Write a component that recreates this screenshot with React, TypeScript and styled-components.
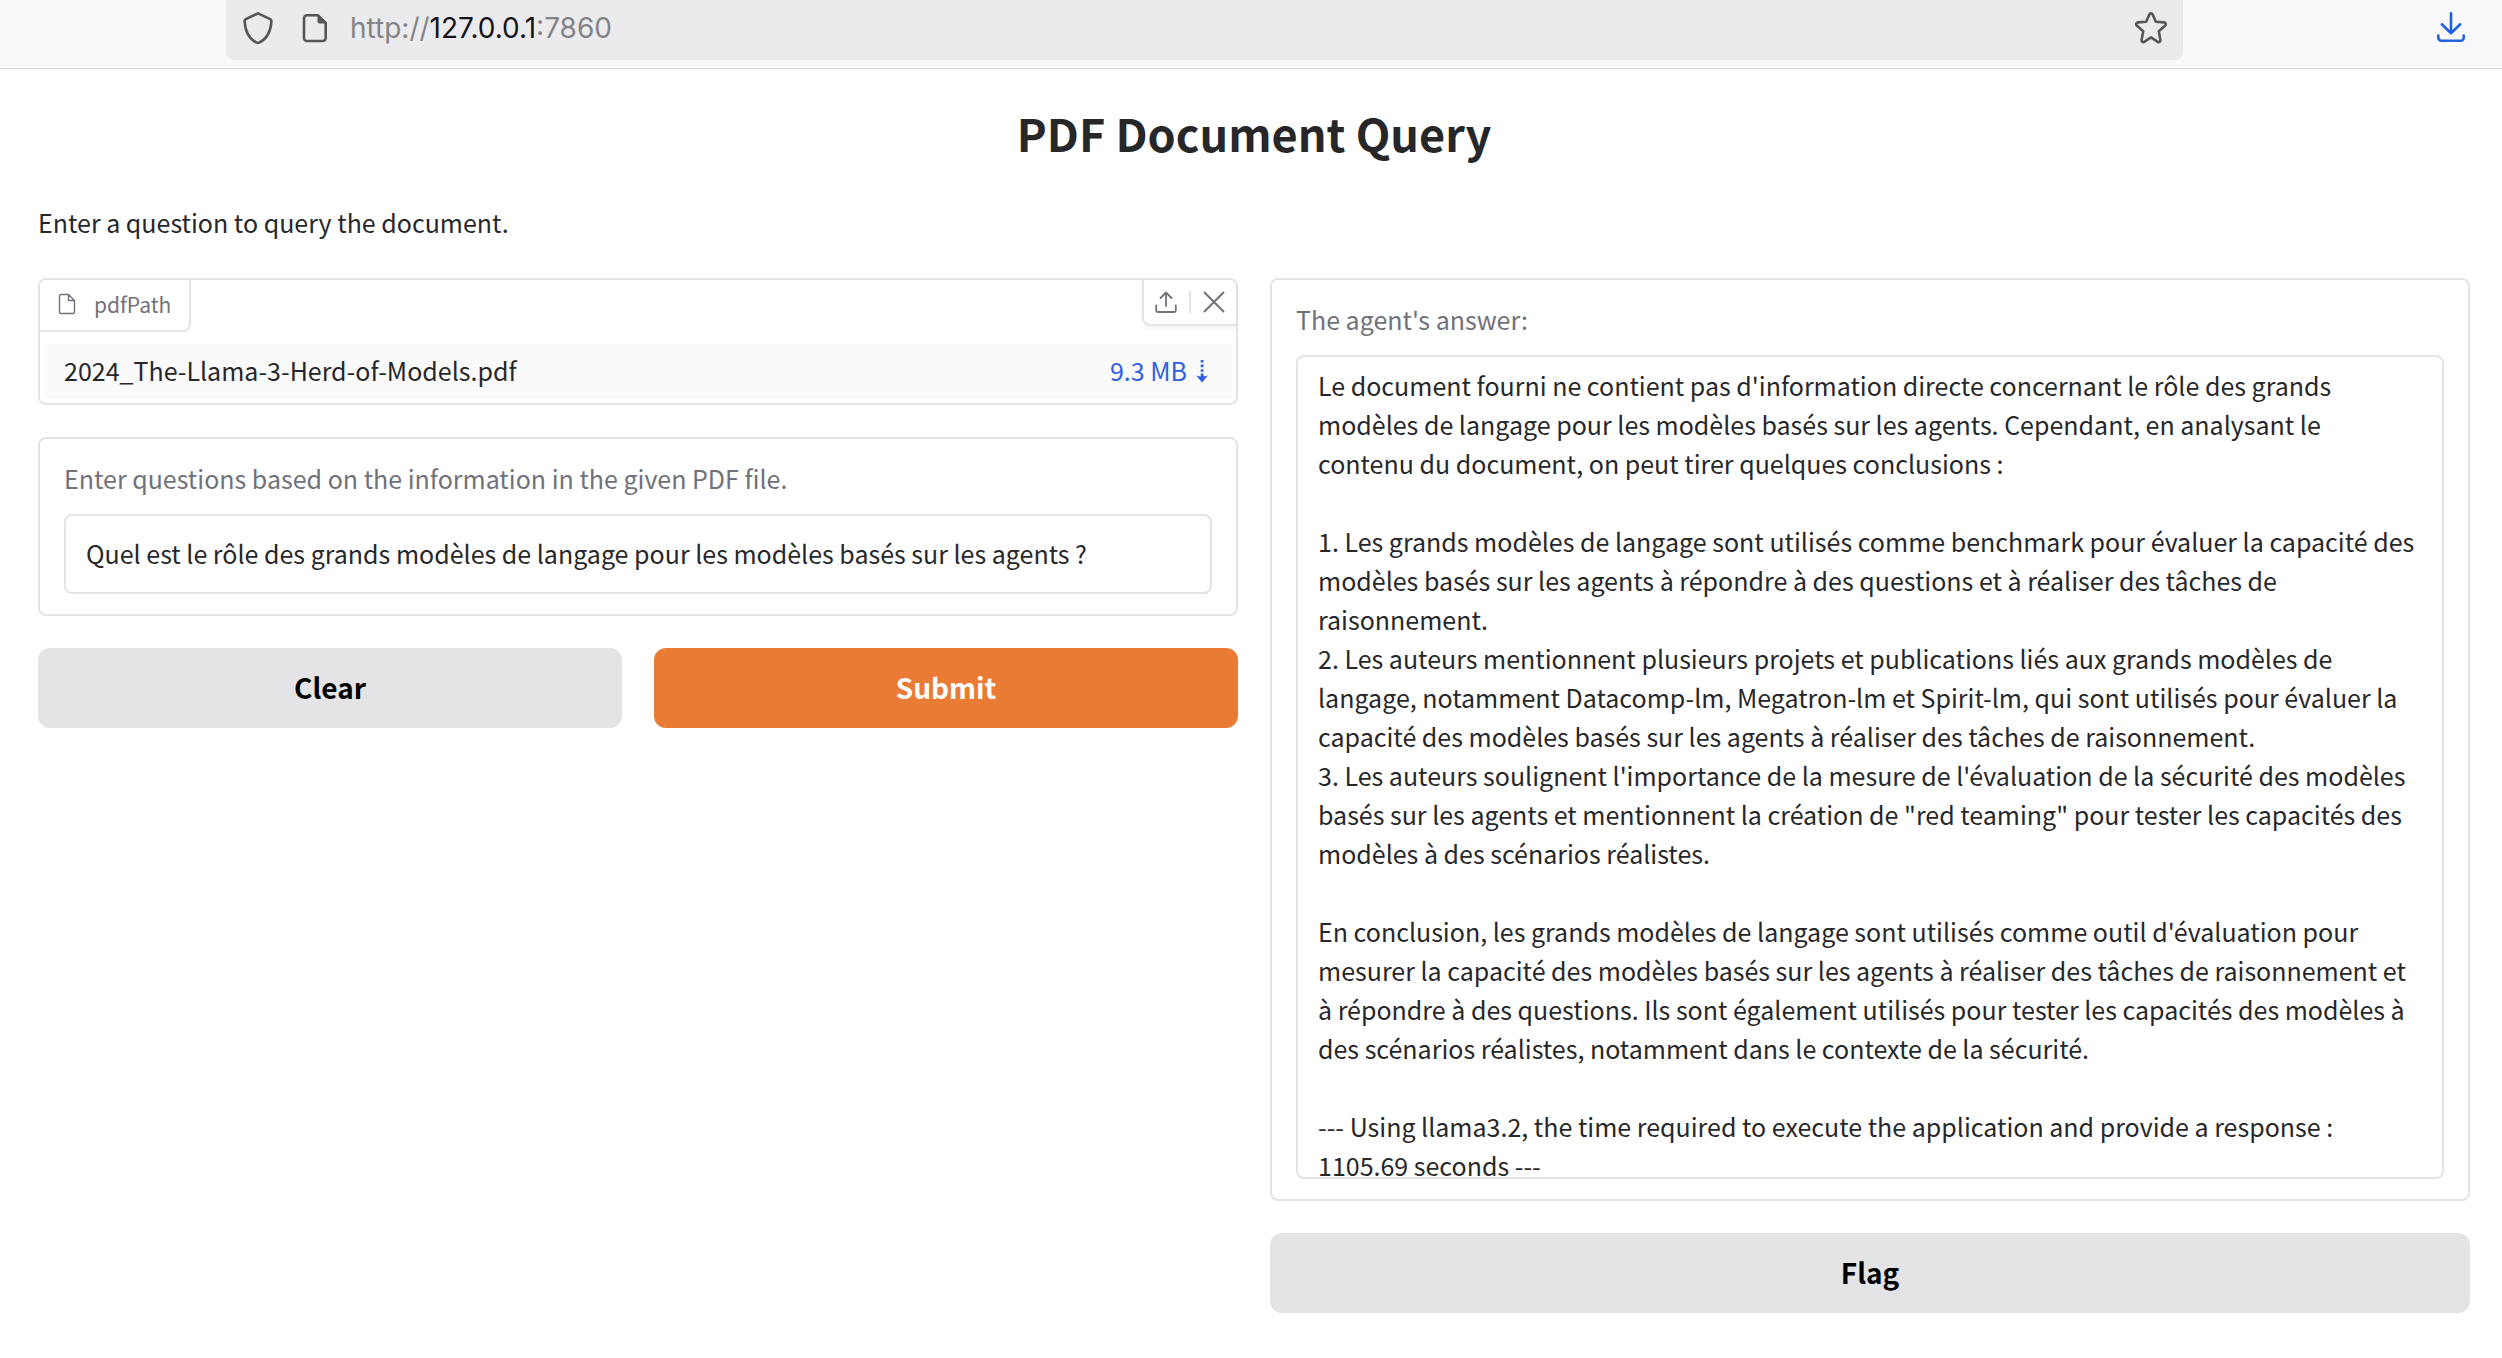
import React, { useState } from "react";
import styled, { createGlobalStyle } from "styled-components";

const sans = `"Noto Sans CJK SC", "Noto Sans", sans-serif`;
const line = "#e4e4e7";
const ink = "#27272a";
const muted = "#71717a";

const GlobalStyle = createGlobalStyle`
  *, *::before, *::after { box-sizing: border-box; }
  body { margin: 0; background: #fff; color: ${ink}; font-family: ${sans}; font-size: 25px; line-height: 39px; }
  button, input, textarea { font: inherit; color: inherit; }
  svg { display: block; flex: none; }
`;

const BrowserBar = styled.header`
  display: flex;
  align-items: flex-start;
  justify-content: space-between;
  height: 69px;
  padding: 0 35px 0 226px;
  background: #f9f9fb;
  border-bottom: 1px solid #d9d9de;
`;

const AddressBar = styled.div`
  flex: 1;
  display: flex;
  align-items: center;
  height: 60px;
  margin-right: 252px;
  padding: 0 15px 4px 16px;
  background: #ebebed;
  border-radius: 0 0 8px 8px;
`;

const Address = styled.div`
  flex: 1;
  margin-left: 22px;
  font-family: Inter, sans-serif;
  font-size: 28px;
  color: #848486;
`;

const Host = styled.span`
  color: #15141a;
`;

const IconButton = styled.button<{ $gap?: number }>`
  display: flex;
  margin: 0 0 0 ${(p) => p.$gap ?? 0}px;
  padding: 0;
  border: 0;
  background: none;
  color: #55555a;
`;

const DownloadsButton = styled(IconButton)`
  padding-top: 11px;
  color: #1f62e0;
`;

const Page = styled.main`
  padding: 32px 32px 45px 38px;
`;

const Title = styled.h1`
  margin: 0 0 38px;
  font-size: 45px;
  line-height: 64px;
  font-weight: 700;
  text-align: center;
`;

const Description = styled.p`
  margin: 0 0 36px;
`;

const Columns = styled.div`
  display: grid;
  grid-template-columns: 1fr 1fr;
  align-items: start;
  gap: 32px;
`;

const Column = styled.section`
  display: flex;
  flex-direction: column;
  gap: 32px;
  min-width: 0;
`;

const Block = styled.div`
  border: 2px solid ${line};
  border-radius: 8px;
  background: #fff;
`;

const FileHeader = styled.div`
  display: flex;
  align-items: flex-start;
  justify-content: space-between;
`;

const FileLabel = styled.div`
  display: flex;
  align-items: center;
  gap: 18px;
  height: 52px;
  padding: 0 18px 2px;
  border: solid ${line};
  border-width: 0 2px 2px 0;
  border-radius: 0 0 8px 0;
  font-size: 21px;
  color: ${muted};
`;

const FileActions = styled.div`
  display: flex;
  align-items: center;
  gap: 12px;
  height: 46px;
  padding: 0 11px;
  border: solid ${line};
  border-width: 0 0 2px 2px;
  border-radius: 0 0 0 8px;
  box-shadow: 0 2px 4px rgba(0, 0, 0, 0.05);
`;

const Divider = styled.span`
  width: 2px;
  height: 22px;
  background: ${line};
`;

const FileAction = styled(IconButton)`
  color: ${muted};
`;

const FileRow = styled.div`
  display: flex;
  align-items: center;
  justify-content: space-between;
  height: 55px;
  margin: 12px 4px 4px;
  padding: 0 24px 2px 20px;
  background: #fafafa;
`;

const FileLink = styled.a`
  display: flex;
  align-items: center;
  gap: 9px;
  color: #2f5fe3;
  text-decoration: none;
`;

const Field = styled(Block)`
  display: flex;
  flex-direction: column;
  padding: 20px 24px;
`;

const FieldLabel = styled.label`
  margin-bottom: 16px;
  color: ${muted};
`;

const boxed = `
  display: block;
  width: 100%;
  border: 2px solid ${line};
  border-radius: 8px;
  background: #fff;
  outline: none;
`;

const TextInput = styled.input`
  ${boxed}
  height: 80px;
  padding: 0 20px 2px;
`;

const Answer = styled.textarea`
  ${boxed}
  padding: 9px 20px 31px;
  resize: none;
  overflow: hidden;
`;

const Actions = styled.div`
  display: grid;
  grid-template-columns: 1fr 1fr;
  gap: 32px;
`;

const Button = styled.button<{ $primary?: boolean }>`
  height: 80px;
  padding: 0 24px 2px;
  border: 0;
  border-radius: 12px;
  background: ${(p) => (p.$primary ? "#e97b35" : "#e4e4e6")};
  color: ${(p) => (p.$primary ? "#fff" : "#000")};
  font-size: 28px;
  font-weight: 700;
`;

const ShieldIcon = () => (
  <svg width="32" height="34" viewBox="0 0 32 34" fill="none" stroke="currentColor" strokeWidth="2.6" strokeLinejoin="round">
    <path d="M16 2.3 28.2 8.2c.9.5 1.3 1.2 1.2 2.2C28.8 20 24.5 28.2 17.2 31.7q-1.2.6-2.400 0C7.500 28.200 3.200 20 2.600 10.400c-.1-1 .3-1.700 1.200-2.200Z" />
  </svg>
);

const PageIcon = () => (
  <svg width="26" height="30" viewBox="0 0 26 30" fill="none" stroke="currentColor" strokeWidth="2.6" strokeLinejoin="round">
    <path d="M5 2.300h11L23.700 10v15a3 3 0 0 1-3 3H5a3 3 0 0 1-3-3V5.300a3 3 0 0 1 3-3Z" />
    <path d="M15.500 2v6.500a2 2 0 0 0 2 2H24Z" fill="currentColor" stroke="none" />
  </svg>
);

const StarIcon = () => (
  <svg width="34" height="34" viewBox="0 0 34 34" fill="none" stroke="currentColor" strokeWidth="2.6" strokeLinejoin="round">
    <path d="M15.300 3.500c.7-1.500 2.700-1.500 3.400 0l3.100 7.200 8.300.7c1.700.2 2.300 2 1.100 3.200l-6.400 5.600 1.600 8.900c.3 1.700-1.200 2.600-2.600 1.700L17 26.300l-6.800 4.500c-1.400.9-2.900 0-2.600-1.700l1.600-8.900-6.400-5.600c-1.200-1.200-.6-3 1.100-3.200l8.300-.7Z" />
  </svg>
);

const DownloadsIcon = () => (
  <svg width="32" height="32" viewBox="0 0 32 32" fill="none" stroke="currentColor" strokeWidth="2.6" strokeLinecap="round" strokeLinejoin="round">
    <path d="M16 2.300v20M6.800 13.300l9.200 9 9.200-9M3.300 24.500v2.200a3 3 0 0 0 3 3h19.400a3 3 0 0 0 3-3v-2.200" />
  </svg>
);

const FileIcon = () => (
  <svg width="18" height="22" viewBox="0 0 18 22" fill="none" stroke="currentColor" strokeWidth="1.4" strokeLinejoin="round">
    <path d="M10.500 1.500H3A1.500 1.500 0 0 0 1.500 3v16A1.500 1.500 0 0 0 3 20.500h12a1.500 1.500 0 0 0 1.500-1.500V7.500Zm0 0v6h6" />
  </svg>
);

const UploadIcon = () => (
  <svg width="22" height="22" viewBox="0 0 22 22" fill="none" stroke="currentColor" strokeWidth="1.8" strokeLinecap="round" strokeLinejoin="round">
    <path d="M11 15V1.500M5.500 7 11 1.500 16.500 7M1.200 14.500v5a1.500 1.500 0 0 0 1.500 1.500h16.600a1.500 1.500 0 0 0 1.500-1.500v-5" />
  </svg>
);

const CloseIcon = () => (
  <svg width="22" height="22" viewBox="0 0 22 22" fill="none" stroke="currentColor" strokeWidth="2" strokeLinecap="round">
    <path d="m1.500 1.500 19 19M20.500 1.500l-19 19" />
  </svg>
);

const ArrowIcon = () => (
  <svg width="12" height="24" viewBox="0 0 12 24" fill="currentColor">
    <path d="M4.700 1h2.800v2.600H4.700ZM4.700 5.600h2.800v2.600H4.700ZM4.700 10.200h2.800v2.600H4.700ZM4.700 14.600h2.800V18H4.700ZM.2 16.500q5.800 1.800 11.600 0L6.100 23.500Z" />
  </svg>
);

const answer = `Le document fourni ne contient pas d'information directe concernant le rôle des grands modèles de langage pour les modèles basés sur les agents. Cependant, en analysant le contenu du document, on peut tirer quelques conclusions :

1. Les grands modèles de langage sont utilisés comme benchmark pour évaluer la capacité des modèles basés sur les agents à répondre à des questions et à réaliser des tâches de raisonnement.
2. Les auteurs mentionnent plusieurs projets et publications liés aux grands modèles de langage, notamment Datacomp-lm, Megatron-lm et Spirit-lm, qui sont utilisés pour évaluer la capacité des modèles basés sur les agents à réaliser des tâches de raisonnement.
3. Les auteurs soulignent l'importance de la mesure de l'évaluation de la sécurité des modèles basés sur les agents et mentionnent la création de "red teaming" pour tester les capacités des modèles à des scénarios réalistes.

En conclusion, les grands modèles de langage sont utilisés comme outil d'évaluation pour mesurer la capacité des modèles basés sur les agents à réaliser des tâches de raisonnement et à répondre à des questions. Ils sont également utilisés pour tester les capacités des modèles à des scénarios réalistes, notamment dans le contexte de la sécurité.

--- Using llama3.2, the time required to execute the application and provide a response : 1105.69 seconds ---`;

export default function App() {
  const [question, setQuestion] = useState(
    "Quel est le rôle des grands modèles de langage pour les modèles basés sur les agents ?"
  );

  return (
    <>
      <GlobalStyle />
      <BrowserBar>
        <AddressBar>
          <IconButton aria-label="Tracking protection"><ShieldIcon /></IconButton>
          <IconButton $gap={28} aria-label="Site information"><PageIcon /></IconButton>
          <Address>http://<Host>127.0.0.1</Host>:7860</Address>
          <IconButton aria-label="Bookmark this page"><StarIcon /></IconButton>
        </AddressBar>
        <DownloadsButton aria-label="Downloads"><DownloadsIcon /></DownloadsButton>
      </BrowserBar>
      <Page>
        <Title>PDF Document Query</Title>
        <Description>Enter a question to query the document.</Description>
        <Columns>
          <Column>
            <Block>
              <FileHeader>
                <FileLabel><FileIcon />pdfPath</FileLabel>
                <FileActions>
                  <FileAction aria-label="Upload"><UploadIcon /></FileAction>
                  <Divider />
                  <FileAction aria-label="Remove"><CloseIcon /></FileAction>
                </FileActions>
              </FileHeader>
              <FileRow>
                <span>2024_The-Llama-3-Herd-of-Models.pdf</span>
                <FileLink href="#download">9.3 MB<ArrowIcon /></FileLink>
              </FileRow>
            </Block>
            <Field>
              <FieldLabel htmlFor="question">Enter questions based on the information in the given PDF file.</FieldLabel>
              <TextInput id="question" value={question} onChange={(e) => setQuestion(e.target.value)} />
            </Field>
            <Actions>
              <Button type="button" onClick={() => setQuestion("")}>Clear</Button>
              <Button type="submit" $primary>Submit</Button>
            </Actions>
          </Column>
          <Column>
            <Field>
              <FieldLabel htmlFor="answer">The agent's answer:</FieldLabel>
              <Answer id="answer" rows={20} readOnly value={answer} />
            </Field>
            <Button type="button">Flag</Button>
          </Column>
        </Columns>
      </Page>
    </>
  );
}
